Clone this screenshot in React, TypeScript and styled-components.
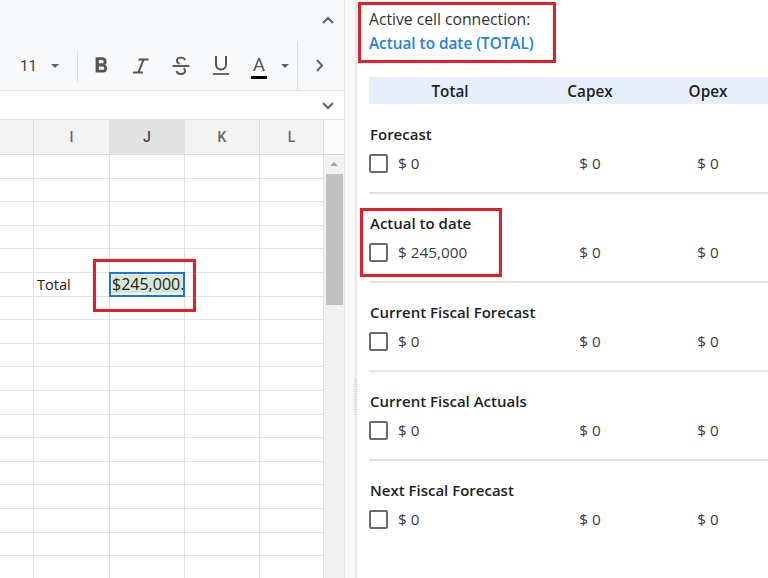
import React from "react";
import styled, { createGlobalStyle } from "styled-components";
import { MdFormatBold } from "react-icons/md";

const GlobalStyle = createGlobalStyle`
  html, body {
    margin: 0;
    padding: 0;
    background: #ffffff;
    overflow: hidden;
  }
  body {
    font-family: "Open Sans", "Noto Sans", sans-serif;
  }
  * {
    box-sizing: border-box;
  }
`;

const Screen = styled.div`
  display: flex;
  width: 768px;
  height: 578px;
  overflow: hidden;
`;

/* ---------- spreadsheet side ---------- */

const SheetPane = styled.div`
  position: relative;
  flex: none;
  width: 345px;
  height: 100%;
  display: flex;
  flex-direction: column;
  border-right: 1px solid #e2e2e2;
`;

const TopStrip = styled.div`
  height: 41px;
  background: #f8f9fa;
  display: flex;
  justify-content: flex-end;
  align-items: center;
  padding-right: 10px;
`;

const Toolbar = styled.div`
  height: 50px;
  background: #f8f9fa;
  border-bottom: 1px solid #e2e2e2;
  display: flex;
  align-items: center;
  padding-left: 20px;
`;

const FontSize = styled.span`
  font-family: Roboto, "Liberation Sans", sans-serif;
  font-size: 15px;
  color: #3c4043;
`;

const CaretBox = styled.div<{ $ml?: number; $w?: number }>`
  margin-left: ${(p) => p.$ml ?? 0}px;
  width: ${(p) => p.$w ?? 8}px;
  display: flex;
  justify-content: center;
  &::after {
    content: "";
    border-left: 4px solid transparent;
    border-right: 4px solid transparent;
    border-top: 4px solid #5f6368;
  }
`;

const Divider = styled.div<{ $ml: number; $full?: boolean }>`
  margin-left: ${(p) => p.$ml}px;
  width: 1px;
  background: #dadce0;
  height: ${(p) => (p.$full ? "100%" : "32px")};
  align-self: ${(p) => (p.$full ? "stretch" : "center")};
`;

const ToolButton = styled.div<{ $ml?: number; $w?: number }>`
  margin-left: ${(p) => p.$ml ?? 0}px;
  width: ${(p) => p.$w ?? 40}px;
  height: 40px;
  display: flex;
  align-items: center;
  justify-content: center;
  color: #555555;
`;

const TextColorGlyph = styled.div`
  display: flex;
  flex-direction: column;
  align-items: center;
  font-family: Roboto, "Liberation Sans", sans-serif;
  font-size: 19px;
  line-height: 18px;
  color: #555555;
  padding-top: 3px;
`;

const ColorBar = styled.div`
  width: 16px;
  height: 3px;
  margin-top: 2px;
  background: #000000;
`;

const FormulaBar = styled.div`
  height: 29px;
  background: #ffffff;
  border-bottom: 1px solid #e2e2e2;
  display: flex;
  justify-content: flex-end;
  align-items: center;
  padding-right: 10px;
`;

const HeaderRow = styled.div`
  height: 35px;
  display: flex;
  border-bottom: 1px solid #d9d9d9;
`;

const HeaderCell = styled.div<{ $w: number; $active?: boolean }>`
  width: ${(p) => p.$w}px;
  flex: none;
  background: ${(p) => (p.$active ? "#e2e2e2" : "#f3f3f3")};
  border-right: 1px solid #dddddd;
  display: flex;
  align-items: center;
  justify-content: center;
  font-family: Roboto, "Liberation Sans", sans-serif;
  font-size: 14px;
  font-weight: 500;
  color: ${(p) => (p.$active ? "#444444" : "#666666")};
`;

const ScrollCorner = styled.div`
  width: 20px;
  flex: none;
  background: #fbfbfb;
`;

const SheetBody = styled.div`
  flex: 1;
  display: flex;
  min-height: 0;
`;

const Grid = styled.div`
  width: 324px;
  flex: none;
  display: flex;
  flex-direction: column;
`;

const BodyRow = styled.div`
  height: 23.6px;
  flex: none;
  display: flex;
  border-bottom: 1px solid #e2e2e2;
`;

const Cell = styled.div<{ $w: number }>`
  position: relative;
  width: ${(p) => p.$w}px;
  flex: none;
  border-right: 1px solid #e2e2e2;
  display: flex;
  align-items: center;
  padding-left: 3px;
  font-size: 14.5px;
  color: #222222;
  white-space: nowrap;
`;

const SelectedCell = styled.div`
  position: absolute;
  top: -1px;
  left: -1px;
  right: -1px;
  bottom: -1px;
  border: 2px solid #1a73e8;
  display: flex;
  align-items: center;
  padding-left: 1px;
  overflow: hidden;
`;

const SelectedText = styled.span`
  background: #d8e8d8;
  font-size: 16px;
  line-height: 18px;
  color: #222222;
  white-space: nowrap;
`;

const ScrollTrack = styled.div`
  width: 20px;
  flex: none;
  background: #f1f1f1;
  display: flex;
  flex-direction: column;
  align-items: center;
`;

const ScrollArrow = styled.div`
  margin-top: 7px;
  border-left: 4px solid transparent;
  border-right: 4px solid transparent;
  border-bottom: 4px solid #a3a3a3;
`;

const ScrollThumb = styled.div`
  margin-top: 8px;
  width: 17px;
  height: 131px;
  background: #c1c1c1;
`;

const Annotation = styled.div<{ $x: number; $y: number; $w: number; $h: number }>`
  position: absolute;
  left: ${(p) => p.$x}px;
  top: ${(p) => p.$y}px;
  width: ${(p) => p.$w}px;
  height: ${(p) => p.$h}px;
  border: 3px solid #e51f2a;
  pointer-events: none;
`;

/* ---------- splitter ---------- */

const Splitter = styled.div`
  flex: none;
  width: 12px;
  height: 100%;
  background: #f8f8f8;
  border-right: 2px solid #e8e8e8;
  padding-top: 378px;
`;

const Grip = styled.div`
  margin-left: 8px;
  width: 5px;
  height: 37px;
  background-image: radial-gradient(circle, #cfcfcf 0.7px, transparent 0.9px);
  background-size: 2.5px 2.5px;
`;

/* ---------- connection panel ---------- */

const Panel = styled.div`
  flex: 1;
  min-width: 0;
  padding: 2px 0 0 12px;
  color: #252423;
`;

const ConnectionBox = styled.div`
  width: 198px;
  margin-left: -11px;
  border: 3px solid #e51f2a;
  padding: 2px 8px 5px;
  line-height: 24px;
  font-size: 15.7px;
  white-space: nowrap;
`;

const ConnectionLabel = styled.div`
  color: #323130;
`;

const ConnectionValue = styled.div`
  color: #2680e0;
  font-weight: 600;
  font-size: 15.3px;
`;

const Columns = styled.div`
  display: grid;
  grid-template-columns: 162px 118px 118px;
  align-items: center;
`;

const HeadBand = styled(Columns)`
  margin-top: 14px;
  margin-bottom: 1px;
  height: 27px;
  background: #e7effc;
  font-size: 15.3px;
  font-weight: 600;
  color: #201f1e;
  text-align: center;
`;

const Section = styled.div<{ $last?: boolean }>`
  position: relative;
  padding: 19px 0;
  border-bottom: ${(p) => (p.$last ? "none" : "2px solid #e3e3e3")};
`;

const SectionTitle = styled.div`
  font-size: 15px;
  font-weight: 600;
  line-height: 20px;
  color: #201f1e;
  padding-left: 1px;
`;

const ValueRow = styled(Columns)`
  margin-top: 9px;
  height: 20px;
  font-size: 15.3px;
  color: #3b3a39;
`;

const TotalCell = styled.div`
  display: flex;
  align-items: center;
  gap: 10px;
`;

const CenterCell = styled.div`
  text-align: center;
`;

const Checkbox = styled.div`
  width: 19px;
  height: 19px;
  border: 2px solid #6b6b6b;
  border-radius: 2px;
  background: #ffffff;
`;

const Chevron = ({ dir }: { dir: "up" | "down" | "right" }) => {
  const pts = dir === "up" ? "1,7 6,2 11,7" : dir === "down" ? "1,2 6,7 11,2" : "2,1 7,6.5 2,12";
  const w = dir === "right" ? 9 : 12;
  const h = dir === "right" ? 13 : 9;
  return (
    <svg width={w} height={h} viewBox={`0 0 ${w} ${h}`}>
      <polyline points={pts} fill="none" stroke="#5f6368" strokeWidth="2" />
    </svg>
  );
};

const ItalicIcon = () => (
  <svg width="26" height="26" viewBox="0 0 26 26">
    <path d="M10.5 6.5H20.5M5 19.5H15M15.6 6.5L10.4 19.5" fill="none" stroke="#555" strokeWidth="2" />
  </svg>
);

const StrikeIcon = () => (
  <svg width="26" height="26" viewBox="0 0 26 26">
    <path
      d="M17.2 7.2C16.4 5.5 14.8 4.6 13 4.6C10.6 4.6 8.9 5.9 8.9 7.8C8.9 9.2 9.8 10.1 11.6 10.8"
      fill="none"
      stroke="#555"
      strokeWidth="1.9"
    />
    <path d="M4.5 13H21.5" stroke="#555" strokeWidth="1.9" />
    <path
      d="M15.6 15.2C16.6 15.9 17.1 16.8 17.1 17.8C17.1 19.8 15.3 21 13 21C10.7 21 9 19.9 8.4 18.1"
      fill="none"
      stroke="#555"
      strokeWidth="1.9"
    />
  </svg>
);

const UnderlineIcon = () => (
  <svg width="26" height="26" viewBox="0 0 26 26">
    <path d="M8 3V11.5A5 5 0 0 0 18 11.5V3" fill="none" stroke="#555" strokeWidth="2" />
    <path d="M5 21H21" stroke="#555" strokeWidth="1.8" />
  </svg>
);

const colWidths = [34, 76, 75, 75, 64];
const colLetters = ["", "I", "J", "K", "L"];
const rowCount = 18;

const sections = [
  { title: "Forecast", total: "$ 0" },
  { title: "Actual to date", total: "$ 245,000", marked: true },
  { title: "Current Fiscal Forecast", total: "$ 0" },
  { title: "Current Fiscal Actuals", total: "$ 0" },
  { title: "Next Fiscal Forecast", total: "$ 0" },
];

export default function App() {
  return (
    <Screen>
      <GlobalStyle />
      <SheetPane>
        <TopStrip>
          <Chevron dir="up" />
        </TopStrip>
        <Toolbar>
          <FontSize>11</FontSize>
          <CaretBox $ml={14} />
          <Divider $ml={18} />
          <ToolButton $ml={3}>
            <MdFormatBold size={26} />
          </ToolButton>
          <ToolButton>
            <ItalicIcon />
          </ToolButton>
          <ToolButton>
            <StrikeIcon />
          </ToolButton>
          <ToolButton>
            <UnderlineIcon />
          </ToolButton>
          <ToolButton $w={36}>
            <TextColorGlyph>
              A
              <ColorBar />
            </TextColorGlyph>
          </ToolButton>
          <CaretBox $w={16} />
          <Divider $ml={4} $full />
          <ToolButton $ml={2}>
            <Chevron dir="right" />
          </ToolButton>
        </Toolbar>
        <FormulaBar>
          <Chevron dir="down" />
        </FormulaBar>
        <HeaderRow>
          {colWidths.map((w, i) => (
            <HeaderCell key={i} $w={w} $active={colLetters[i] === "J"}>
              {colLetters[i]}
            </HeaderCell>
          ))}
          <ScrollCorner />
        </HeaderRow>
        <SheetBody>
          <Grid>
            {Array.from({ length: rowCount }).map((_, r) => (
              <BodyRow key={r}>
                {colWidths.map((w, c) => (
                  <Cell key={c} $w={w}>
                    {r === 5 && c === 1 && "Total"}
                    {r === 5 && c === 2 && (
                      <SelectedCell>
                        <SelectedText>$245,000.</SelectedText>
                      </SelectedCell>
                    )}
                  </Cell>
                ))}
              </BodyRow>
            ))}
          </Grid>
          <ScrollTrack>
            <ScrollArrow />
            <ScrollThumb />
          </ScrollTrack>
        </SheetBody>
        <Annotation $x={93} $y={259} $w={103} $h={53} />
      </SheetPane>

      <Splitter>
        <Grip />
      </Splitter>

      <Panel>
        <ConnectionBox>
          <ConnectionLabel>Active cell connection:</ConnectionLabel>
          <ConnectionValue>Actual to date (TOTAL)</ConnectionValue>
        </ConnectionBox>
        <HeadBand>
          <div>Total</div>
          <div>Capex</div>
          <div>Opex</div>
        </HeadBand>
        {sections.map((s, i) => (
          <Section key={s.title} $last={i === sections.length - 1}>
            <SectionTitle>{s.title}</SectionTitle>
            <ValueRow>
              <TotalCell>
                <Checkbox />
                <span>{s.total}</span>
              </TotalCell>
              <CenterCell>$ 0</CenterCell>
              <CenterCell>$ 0</CenterCell>
            </ValueRow>
            {s.marked && <Annotation $x={-9} $y={14} $w={142} $h={69} />}
          </Section>
        ))}
      </Panel>
    </Screen>
  );
}
